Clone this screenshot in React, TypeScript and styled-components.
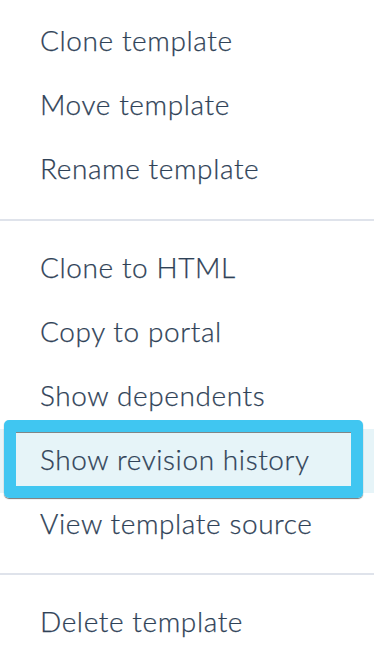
import React from "react";
import styled, { createGlobalStyle } from "styled-components";

const Global = createGlobalStyle`
  html, body { margin: 0; padding: 0; background: #ffffff; }
  body { font-family: "Lato", "Liberation Sans", sans-serif; }
`;

const Menu = styled.div`
  width: 374px;
  padding-top: 10px;
  display: flex;
  flex-direction: column;
`;

const Section = styled.div<{ $padTop: number; $padBottom: number }>`
  display: flex;
  flex-direction: column;
  padding-top: ${(p) => p.$padTop}px;
  padding-bottom: ${(p) => p.$padBottom}px;
`;

const Divider = styled.div`
  height: 2px;
  background: #dfe3eb;
`;

const Item = styled.div<{ $active?: boolean }>`
  position: relative;
  height: 64px;
  box-sizing: border-box;
  padding-bottom: 4px;
  display: flex;
  align-items: center;
  padding-left: 40px;
  font-size: 28px;
  font-weight: 300;
  color: #2f4257;
  -webkit-text-stroke: 0.25px #2f4257;
  letter-spacing: 0.6px;
  background: ${(p) => (p.$active ? "#e6f4f8" : "transparent")};
`;

const Callout = styled.div`
  position: absolute;
  left: 4px;
  top: -9px;
  width: 359px;
  height: 78px;
  box-sizing: border-box;
  border: 12px solid #40c6f1;
  border-radius: 5px;
  box-shadow: 0 1px 1px rgba(60, 60, 60, 0.7),
    inset 0 1px 0 rgba(60, 60, 60, 0.6);
  pointer-events: none;
`;

const sections: { items: string[]; padTop: number; padBottom: number }[] = [
  { items: ["Clone template", "Move template", "Rename template"], padTop: 0, padBottom: 17 },
  {
    items: [
      "Clone to HTML",
      "Copy to portal",
      "Show dependents",
      "Show revision history",
      "View template source",
    ],
    padTop: 16,
    padBottom: 16,
  },
  { items: ["Delete template"], padTop: 16, padBottom: 0 },
];

export default function App() {
  return (
    <>
      <Global />
      <Menu>
        {sections.map((s, i) => (
          <React.Fragment key={i}>
            {i > 0 && <Divider />}
            <Section $padTop={s.padTop} $padBottom={s.padBottom}>
              {s.items.map((label) => {
                const active = label === "Show revision history";
                return (
                  <Item key={label} $active={active}>
                    {label}
                    {active && <Callout />}
                  </Item>
                );
              })}
            </Section>
          </React.Fragment>
        ))}
      </Menu>
    </>
  );
}
